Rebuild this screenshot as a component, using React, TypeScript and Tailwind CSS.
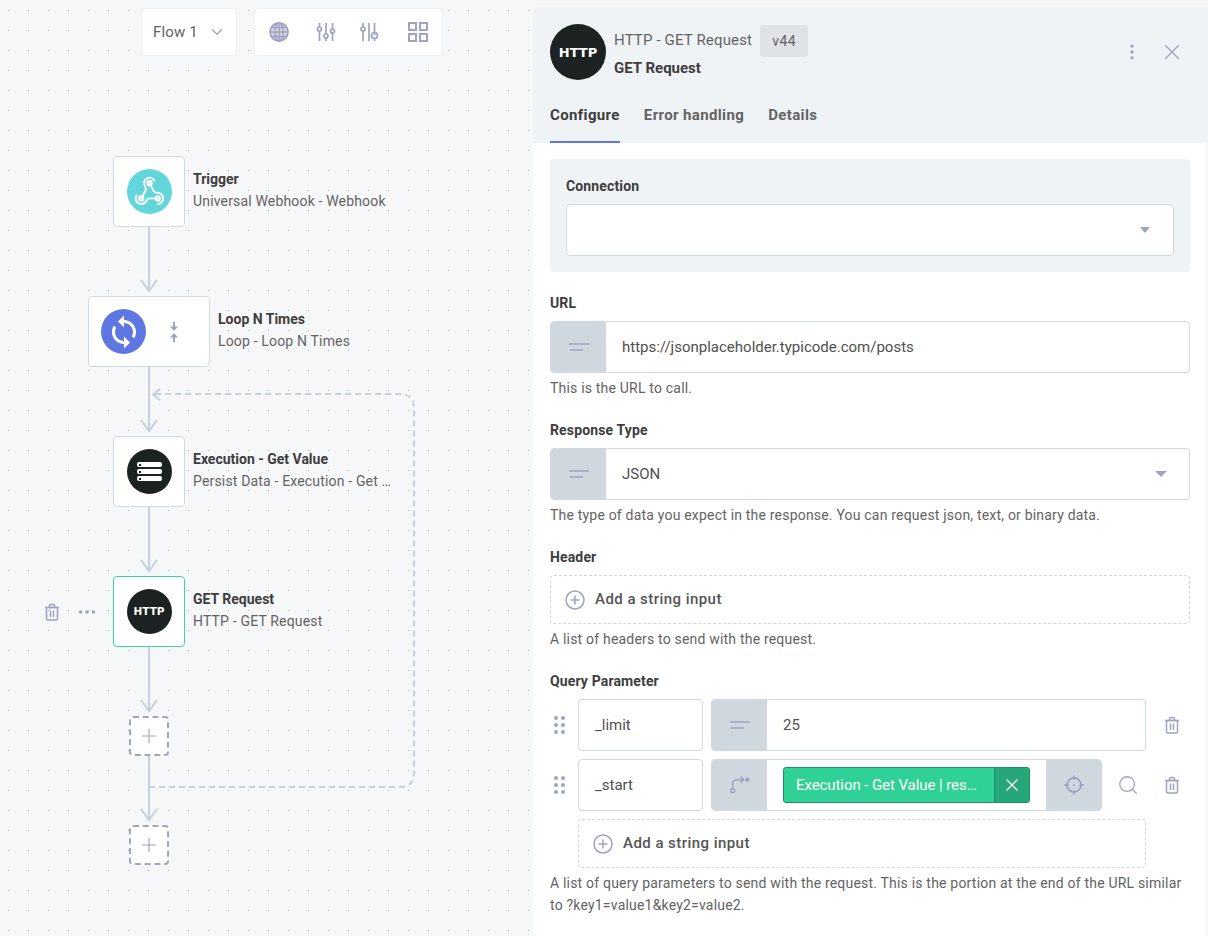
import { Plus, X, Search, EllipsisVertical, Ellipsis, ChevronDown } from "lucide-react";
import type { ReactNode } from "react";

const ICON = "#9fa3c3";

function SlidersA() {
  return (
    <svg width="22" height="22" viewBox="0 0 22 22" fill="none" stroke={ICON} strokeWidth="1.7">
      <path d="M4.5 2v4M4.5 10v10M11 2v11M11 17v3M17.5 2v6M17.5 12v8" />
      <circle cx="4.5" cy="8" r="2" />
      <circle cx="11" cy="15" r="2" />
      <circle cx="17.5" cy="10" r="2" />
    </svg>
  );
}

function SlidersB() {
  return (
    <svg width="22" height="22" viewBox="0 0 22 22" fill="none" stroke={ICON} strokeWidth="1.7">
      <path d="M4 2v4M4 10v10M10 2v18M15.5 2v9.500M15.500 17.500V20" />
      <circle cx="4" cy="8" r="2" />
      <circle cx="15.500" cy="14.500" r="3" />
      <circle cx="15.500" cy="13.500" r="1" fill={ICON} stroke="none" />
    </svg>
  );
}

function Globe() {
  return (
    <svg width="20" height="20" viewBox="0 0 20 20" fill="none" stroke={ICON} strokeWidth="1.4">
      <circle cx="10" cy="10" r="9" fill={ICON} fillOpacity="0.45" strokeWidth="1.8" />
      <ellipse cx="10" cy="10" rx="4.200" ry="9" />
      <path d="M10 1v18M1 10h18M2.400 5.500h15.200M2.400 14.500h15.200" />
    </svg>
  );
}

function GridIcon() {
  return (
    <svg width="20" height="20" viewBox="0 0 20 20" fill="none" stroke={ICON} strokeWidth="2">
      <rect x="1" y="1" width="7" height="7" />
      <rect x="12" y="1" width="7" height="7" />
      <rect x="1" y="12" width="7" height="7" />
      <rect x="12" y="12" width="7" height="7" />
    </svg>
  );
}

function TrashIcon() {
  return (
    <svg width="16" height="18" viewBox="0 0 16 18" fill="none" stroke={ICON} strokeWidth="1.5">
      <path d="M1 4.500h14" />
      <path d="M5.500 4.500V3A1.500 1.500 0 0 1 7 1.500h2A1.500 1.500 0 0 1 10.500 3v1.500" />
      <rect x="2.500" y="4.500" width="11" height="12.500" rx="1.500" />
      <path d="M6.500 7.500v6.500M9.500 7.500v6.500" />
    </svg>
  );
}

function TextLines() {
  return (
    <svg width="20" height="10" viewBox="0 0 20 10" fill="none" stroke={ICON} strokeWidth="1.5">
      <path d="M0 2h20M1 8h13" />
    </svg>
  );
}

function HttpLogo({ small }: { small?: boolean }) {
  return (
    <div
      className={
        small
          ? "flex h-[45px] w-[45px] items-center justify-center rounded-full bg-[#1b2221] text-[10.5px]"
          : "flex h-[56px] w-[56px] shrink-0 items-center justify-center rounded-full bg-[#1b2221] text-[13px]"
      }
    >
      <span className="font-['DejaVu_Sans',sans-serif] leading-none font-bold text-white">HTTP</span>
    </div>
  );
}

function WebhookLogo() {
  return (
    <div className="flex h-[45px] w-[45px] items-center justify-center rounded-full bg-[#62d6da]">
      <svg width="33" height="33" viewBox="0 0 24 24" fill="none" stroke="white" strokeWidth="1.400" strokeLinecap="round" strokeLinejoin="round">
        <path d="M18 16.980h-5.990c-1.100 0-1.950.940-2.480 1.900A4 4 0 0 1 2 17c.010-.700.200-1.400.570-2" />
        <path d="m6 17 3.130-5.780c.530-.970.100-2.180-.500-3.100a4 4 0 1 1 6.890-4.060" />
        <path d="m12 6 3.130 5.730C15.660 12.700 16.900 13 18 13a4 4 0 0 1 0 8" />
        <circle cx="12" cy="6" r="1.600" />
        <circle cx="6" cy="17" r="1.600" />
        <circle cx="18" cy="17" r="1.600" />
      </svg>
    </div>
  );
}

function LoopLogo() {
  return (
    <div className="flex h-[45px] w-[45px] shrink-0 items-center justify-center rounded-full bg-[#5f77e3]">
      <svg width="36" height="36" viewBox="0 0 24 24" fill="white">
        <path d="M12 4V1L8 5l4 4V6c3.310 0 6 2.690 6 6 0 1.010-.250 1.970-.700 2.800l1.460 1.460C19.540 15.030 20 13.570 20 12c0-4.420-3.580-8-8-8zm0 14c-3.310 0-6-2.690-6-6 0-1.010.250-1.970.700-2.800L5.240 7.740C4.460 8.970 4 10.430 4 12c0 4.420 3.580 8 8 8v3l4-4-4-4v3z" />
      </svg>
    </div>
  );
}

function StorageLogo() {
  return (
    <div className="flex h-[45px] w-[45px] flex-col items-center justify-center gap-[2px] rounded-full bg-[#1b2221]">
      {[0, 1, 2].map((i) => (
        <div key={i} className="flex h-[5px] w-[25px] items-center rounded-[2px] bg-white pl-[2px]">
          <div className="h-[2px] w-[2px] bg-[#1b2221]" />
        </div>
      ))}
    </div>
  );
}

interface FlowNodeProps {
  className: string;
  title: string;
  subtitle: string;
  icon: ReactNode;
}

function FlowNode({ className, title, subtitle, icon }: FlowNodeProps) {
  return (
    <div className={`absolute flex items-center ${className}`}>
      {icon}
      <div className="absolute top-[13px] left-full ml-2 w-[210px]">
        <div className="text-[14px] leading-[20px] font-bold text-[#3d3d3d]">{title}</div>
        <div className="mt-[2px] text-[14px] leading-[20px] tracking-[0.012em] text-[#636363]">{subtitle}</div>
      </div>
    </div>
  );
}

function NodeBox({ children, active, wide }: { children: ReactNode; active?: boolean; wide?: boolean }) {
  return (
    <div
      className={`flex h-[71px] items-center rounded-[4px] border bg-white ${wide ? "w-[122px] pl-[12px]" : "w-[72px] justify-center"} ${active ? "border-[#3ad6a0]" : "border-[#d0dae3]"}`}
    >
      {children}
    </div>
  );
}

function AddBox({ className }: { className: string }) {
  return (
    <div className={`absolute flex h-[40px] w-[40px] items-center justify-center rounded-[4px] border-2 border-dashed border-[#a2a5c0] bg-white ${className}`}>
      <Plus size={22} color={ICON} strokeWidth={1.300} />
    </div>
  );
}

function Connectors() {
  const arrows = [291, 431, 571, 711, 820];
  return (
    <svg className="absolute inset-0" width="533" height="936" fill="none" stroke="#c5d1dc" strokeWidth="2">
      <path d="M149 227V290M149 367V430M149 507V570M149 647V710M149 755V819" />
      {arrows.map((y) => (
        <path key={y} d={`M141 ${y - 11}L149 ${y}L157 ${y - 11}`} />
      ))}
      <path d="M149 787H400Q414 787 414 773V408Q414 394 400 394H153" strokeDasharray="6 4" />
      <path d="M160 389L153 394.500L160 400" />
    </svg>
  );
}

function Canvas() {
  return (
    <div className="relative h-[936px] w-[533px] shrink-0 bg-[#f6f7f9] bg-[radial-gradient(circle_at_0.5px_0.5px,#a9b0bb_0.6px,transparent_0.9px)] bg-[length:20px_20px] bg-[position:8px_10px]">
      <div className="absolute top-[8px] left-[141px] flex h-[48px] w-[96px] items-center gap-[10px] rounded-[3px] border border-[#eef0f4] bg-white pl-[11px] text-[15px] tracking-[0.01em] text-[#636363]">
        Flow 1
        <ChevronDown size={18} color={ICON} strokeWidth={1.600} />
      </div>
      <div className="absolute top-[8px] left-[254px] flex h-[48px] w-[189px] items-center rounded-[3px] border border-[#eef0f4] bg-white pl-[14px]">
        <Globe />
        <div className="ml-[26px]">
          <SlidersA />
        </div>
        <div className="ml-[22px]">
          <SlidersB />
        </div>
        <div className="ml-[27px]">
          <GridIcon />
        </div>
      </div>
      <Connectors />
      <FlowNode className="top-[156px] left-[113px]" title="Trigger" subtitle="Universal Webhook - Webhook" icon={<NodeBox><WebhookLogo /></NodeBox>} />
      <FlowNode
        className="top-[296px] left-[88px]"
        title="Loop N Times"
        subtitle="Loop - Loop N Times"
        icon={
          <NodeBox wide>
            <LoopLogo />
            <svg className="ml-[24px]" width="8" height="20" viewBox="0 0 8 20" fill={ICON} stroke={ICON}>
              <path d="M4 0v6M4 13v7" strokeWidth="2" />
              <path d="M0 4.500h8L4 9zM0 15.500h8L4 11z" strokeWidth="0" />
            </svg>
          </NodeBox>
        }
      />
      <FlowNode className="top-[436px] left-[113px]" title="Execution - Get Value" subtitle="Persist Data - Execution - Get …" icon={<NodeBox><StorageLogo /></NodeBox>} />
      <FlowNode className="top-[576px] left-[113px]" title="GET Request" subtitle="HTTP - GET Request" icon={<NodeBox active><HttpLogo small /></NodeBox>} />
      <div className="absolute top-[603px] left-[44px]">
        <TrashIcon />
      </div>
      <Ellipsis className="absolute top-[601px] left-[76px]" size={22} color={ICON} strokeWidth={2} />
      <AddBox className="top-[716px] left-[129px]" />
      <AddBox className="top-[825px] left-[129px]" />
    </div>
  );
}

function Label({ children, className = "" }: { children: ReactNode; className?: string }) {
  return <div className={`text-[14px] leading-[20px] font-bold tracking-[0.01em] text-[#3d3d3d] ${className}`}>{children}</div>;
}

function Help({ children }: { children: ReactNode }) {
  return <div className="mt-[4px] text-[14px] leading-[22px] tracking-[0.014em] text-[#636363]">{children}</div>;
}

function Addon({ children }: { children: ReactNode }) {
  return <div className="flex h-full w-[55px] shrink-0 items-center justify-center bg-[#cfd7df]">{children}</div>;
}

function InputRow({ value, trailing }: { value: string; trailing?: ReactNode }) {
  return (
    <div className="flex h-[52px] items-center overflow-hidden rounded-[4px] border border-[#cfd7df] bg-white">
      <Addon>
        <TextLines />
      </Addon>
      <div className="flex-1 pl-[16px] text-[15px] text-[#4f4f4f]">{value}</div>
      {trailing}
    </div>
  );
}

function AddString({ className = "" }: { className?: string }) {
  return (
    <div className={`flex items-center gap-[10px] rounded-[4px] border border-dashed border-[#cfd7df] bg-white pl-[14px] text-[15px] font-medium tracking-[0.03em] text-[#555555] ${className}`}>
      <svg width="20" height="20" viewBox="0 0 20 20" fill="none" stroke={ICON} strokeWidth="1.500">
        <circle cx="10" cy="10" r="9" />
        <path d="M10 5.500v9M5.500 10h9" />
      </svg>
      Add a string input
    </div>
  );
}

function Drag() {
  return (
    <div className="grid w-[28px] shrink-0 grid-cols-[4px_4px] content-center justify-start gap-x-[3px] gap-y-[3px] pl-[4px]">
      {[0, 1, 2, 3, 4, 5].map((i) => (
        <div key={i} className="h-[4px] w-[4px] rounded-full bg-[#9fa3c3]" />
      ))}
    </div>
  );
}

function KeyField({ value }: { value: string }) {
  return (
    <div className="mr-[8px] flex h-[52px] w-[125px] shrink-0 items-center rounded-[4px] border border-[#cfd7df] pl-[16px] text-[15px] text-[#4f4f4f]">
      {value}
    </div>
  );
}

function Panel() {
  return (
    <div className="mt-[7px] flex flex-1 flex-col">
      <div className="flex h-[136px] flex-col rounded-tl-[4px] bg-[#f0f3f6] pl-[17px]">
        <div className="mt-[17px] flex">
          <HttpLogo />
          <div className="ml-[8px]">
            <div className="flex items-start">
              <div className="mt-[6px] text-[15px] leading-[20px] tracking-[0.01em] text-[#636363]">HTTP - GET Request</div>
              <div className="mt-[1px] ml-[8px] flex h-[32px] w-[48px] items-center justify-center rounded-[3px] bg-[#dfe3e6] text-[14px] tracking-[0.025em] text-[#636363]">v44</div>
            </div>
            <div className="mt-[1px] text-[15px] leading-[20px] font-bold text-[#3d3d3d]">GET Request</div>
          </div>
          <div className="mr-[23px] ml-auto flex items-center gap-[17px]">
            <EllipsisVertical size={20} color={ICON} strokeWidth={2} />
            <X size={26} color={ICON} strokeWidth={1.200} />
          </div>
        </div>
        <div className="mt-auto flex h-[44px] gap-[24px] text-[15px] leading-[20px] font-bold tracking-[0.025em] text-[#636363]">
          <div className="border-b-2 border-[#5f77e3] pt-[6px] text-[#3d3d3d]">Configure</div>
          <div className="pt-[6px]">Error handling</div>
          <div className="pt-[6px]">Details</div>
        </div>
      </div>
      <div className="mr-[2px] flex-1 bg-white pt-[16px] pr-[16px] pb-[20px] pl-[17px]">
        <div className="h-[113px] rounded-[4px] bg-[#f0f3f6] px-[16px] pt-[17px]">
          <Label>Connection</Label>
          <div className="mt-[8px] flex h-[52px] items-center justify-end rounded-[4px] border border-[#cfd7df] bg-white pr-[23px]">
            <div className="h-0 w-0 border-x-[5px] border-t-[6px] border-x-transparent border-t-[#9fa3c3]" />
          </div>
        </div>
        <Label className="mt-[21px]">URL</Label>
        <div className="mt-[8px]">
          <InputRow value="https://jsonplaceholder.typicode.com/posts" />
        </div>
        <Help>This is the URL to call.</Help>
        <Label className="mt-[21px]">Response Type</Label>
        <div className="mt-[8px]">
          <InputRow value="JSON" trailing={<div className="mr-[22px] h-0 w-0 border-x-[6px] border-t-[6px] border-x-transparent border-t-[#9fa3c3]" />} />
        </div>
        <Help>The type of data you expect in the response. You can request json, text, or binary data.</Help>
        <Label className="mt-[21px]">Header</Label>
        <AddString className="mt-[8px] h-[49px]" />
        <Help>A list of headers to send with the request.</Help>
        <Label className="mt-[21px]">Query Parameter</Label>
        <div className="mt-[8px] flex h-[52px]">
          <Drag />
          <KeyField value="_limit" />
          <div className="w-[435px]">
            <InputRow value="25" />
          </div>
          <div className="flex flex-1 items-center justify-end pr-[10px]">
            <TrashIcon />
          </div>
        </div>
        <div className="mt-[8px] flex h-[52px]">
          <Drag />
          <KeyField value="_start" />
          <div className="flex h-[52px] w-[391px] items-center overflow-hidden rounded-[4px] border border-[#cfd7df] bg-white">
            <Addon>
              <svg width="22" height="22" viewBox="0 0 22 22" fill="none" stroke={ICON} strokeWidth="1.500">
                <circle cx="3.700" cy="16.700" r="2" />
                <path d="M3.700 14.700V10Q3.700 5.700 8 5.700H14" />
                <path d="M11.500 2.700l3 3-3 3" />
                <circle cx="18.500" cy="5.700" r="2.200" fill={ICON} stroke="none" />
              </svg>
            </Addon>
            <div className="flex flex-1 pl-[16px]">
              <div className="flex h-[36px] w-[247px] items-center overflow-hidden rounded-[3px] border border-[#1f8f68] bg-[#30d196] text-[15px] tracking-[-0.005em] text-white">
                <div className="flex-1 pl-[12px]">Execution - Get Value | res…</div>
                <div className="flex h-full w-[35px] items-center justify-center border-l border-[#1f8f68] bg-[#26a77a]">
                  <X size={20} color="white" strokeWidth={1.500} />
                </div>
              </div>
            </div>
            <Addon>
              <svg width="20" height="20" viewBox="0 0 20 20" fill="none" stroke={ICON} strokeWidth="1.800">
                <circle cx="10" cy="10" r="7" />
                <circle cx="10" cy="10" r="1" fill={ICON} stroke="none" />
                <path d="M10 0.500v4M10 15.500v4M0.500 10h4M15.500 10h4" />
              </svg>
            </Addon>
          </div>
          <div className="flex w-[52px] items-center justify-center">
            <Search size={22} color={ICON} strokeWidth={1.400} />
          </div>
          <div className="flex flex-1 items-center justify-end pr-[10px]">
            <TrashIcon />
          </div>
        </div>
        <AddString className="mt-[8px] ml-[28px] h-[49px] w-[568px]" />
        <Help>
          A list of query parameters to send with the request. This is the portion at the end of the URL similar to ?key1=value1&amp;key2=value2.
        </Help>
      </div>
    </div>
  );
}

export default function App() {
  return (
    <div className="flex h-[936px] w-[1208px] overflow-hidden bg-[#f6f7f9] font-['Roboto',sans-serif]">
      <Canvas />
      <Panel />
    </div>
  );
}
